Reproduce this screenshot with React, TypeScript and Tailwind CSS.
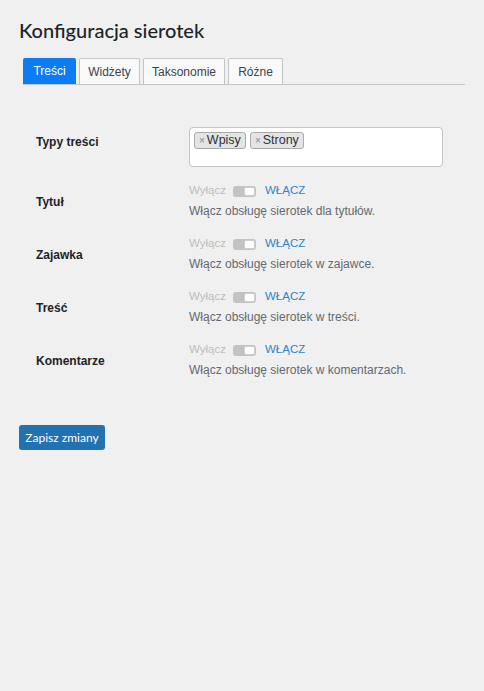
import React from "react";

const rows = [
  { label: "Tytuł", desc: "Włącz obsługę sierotek dla tytułów." },
  { label: "Zajawka", desc: "Włącz obsługę sierotek w zajawce." },
  { label: "Treść", desc: "Włącz obsługę sierotek w treści." },
  { label: "Komentarze", desc: "Włącz obsługę sierotek w komentarzach." },
];

const tabs = [
  { name: "Treści", w: "w-[53px]" },
  { name: "Widżety", w: "w-[61px]" },
  { name: "Taksonomie", w: "w-[82px]" },
  { name: "Różne", w: "w-[55px]" },
];

function Toggle() {
  return (
    <div className="w-[23px] h-[11px] rounded-[3px] bg-[#c3c3c3] flex items-center justify-end p-[1px]">
      <div className="w-[11px] h-[9px] rounded-[2px] bg-white border border-[#d0d0d0]" />
    </div>
  );
}

export default function App() {
  return (
    <div
      className="min-h-[691px] w-full bg-[#f0f0f1] text-[#1d2327]"
      style={{ fontFamily: "'Liberation Sans', Arial, sans-serif" }}
    >
      <div className="pl-[19px] pt-[16px] pr-[19px]">
        <h1
          className="text-[20px] leading-[28px] font-medium text-[#1d2327]"
          style={{ fontFamily: "Lato, 'Open Sans', sans-serif" }}
        >
          Konfiguracja sierotek
        </h1>
        <div className="mt-[14px] ml-[4px] w-[442px] flex gap-[3px] border-b border-[#c3c4c7]">
          {tabs.map((t, i) => (
            <div
              key={t.name}
              className={`${t.w} h-[26px] flex items-center justify-center text-[12px] rounded-t-[2px] ${
                i === 0
                  ? "bg-[#0c7cf5] text-white"
                  : "bg-[#f9f9f9] text-[#3c434a] border border-b-0 border-[#c3c4c7]"
              }`}
            >
              {t.name}
            </div>
          ))}
        </div>

        <div className="mt-[42px] pl-[17px] flex flex-col">
          <div className="flex">
            <div className="w-[153px] pt-[5px] text-[12px] leading-[20px] font-bold">Typy treści</div>
            <div className="w-[254px] h-[40px] bg-white border border-[#c3c4c7] rounded-[4px] px-[4px] pt-[4px] flex items-start gap-[4px]">
              {["Wpisy", "Strony"].map((t) => (
                <div
                  key={t}
                  className="h-[17px] px-[4px] bg-[#e4e4e4] border border-[#aaaaaa] rounded-[3px] flex items-center gap-[2px] text-[12.5px] leading-[15px] text-[#2c3338]"
                >
                  <span className="text-[10px] text-[#888]">×</span>
                  {t}
                </div>
              ))}
            </div>
          </div>

          <div className="mt-[14px] flex flex-col gap-[13px]">
            {rows.map((r) => (
              <div key={r.label} className="flex items-center">
                <div className="w-[153px] text-[12px] leading-[20px] font-bold pt-[2px]">{r.label}</div>
                <div className="flex flex-col">
                  <div className="h-[20px] flex items-center text-[11.5px]">
                    <span className="text-[#bdbdbd]">Wyłącz</span>
                    <span className="ml-[7px]">
                      <Toggle />
                    </span>
                    <span className="ml-[9px] text-[#2a87c8]">WŁĄCZ</span>
                  </div>
                  <div className="h-[20px] flex items-center text-[12px] text-[#646970]">{r.desc}</div>
                </div>
              </div>
            ))}
          </div>
        </div>

        <button
          className="mt-[45px] w-[86px] h-[25px] bg-[#2271b1] text-white text-[12px] rounded-[3px] flex items-center justify-center"
          style={{ fontFamily: "Lato, 'Open Sans', sans-serif" }}
        >
          Zapisz zmiany
        </button>
      </div>
    </div>
  );
}
